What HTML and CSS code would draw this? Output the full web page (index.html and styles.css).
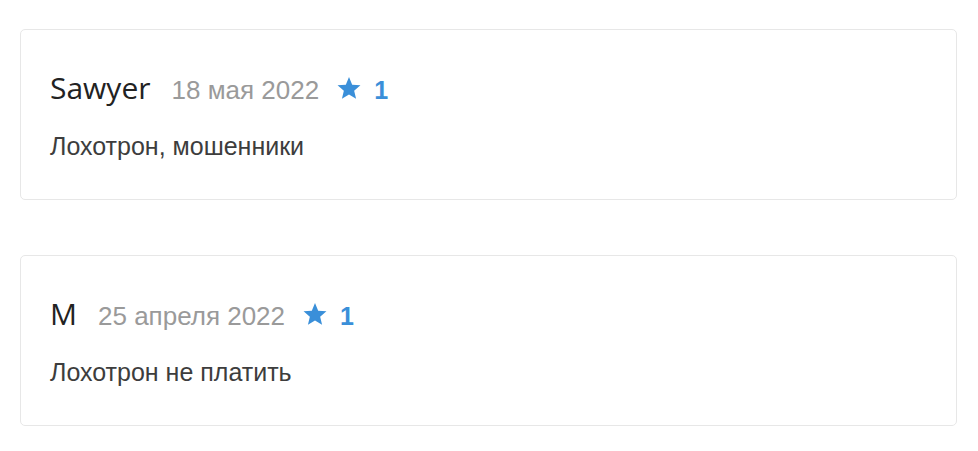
FILE: index.html
```html
<!DOCTYPE html>
<html lang="ru">
<head>
<meta charset="utf-8">
<link rel="stylesheet" href="styles.css">
</head>
<body>
<div class="list">
  <div class="card">
    <div class="head">
      <span class="name">Sawyer</span>
      <span class="date">18 мая 2022</span>
      <svg class="star" viewBox="0 0 24 21.2"><path d="M12 0L15.06 7.39L23.03 8.02L16.95 13.21L18.82 20.98L12 16.8L5.18 20.98L7.05 13.21L0.97 8.02L8.94 7.39Z"/></svg>
      <span class="num">1</span>
    </div>
    <p class="text">Лохотрон, мошенники</p>
  </div>
  <div class="card">
    <div class="head">
      <span class="name">M</span>
      <span class="date">25 апреля 2022</span>
      <svg class="star" viewBox="0 0 24 21.2"><path d="M12 0L15.06 7.39L23.03 8.02L16.95 13.21L18.82 20.98L12 16.8L5.18 20.98L7.05 13.21L0.97 8.02L8.94 7.39Z"/></svg>
      <span class="num">1</span>
    </div>
    <p class="text">Лохотрон не платить</p>
  </div>
</div>
</body>
</html>
```
FILE: styles.css
```css
html, body {
  margin: 0;
  padding: 0;
  background: #fff;
}
.list {
  display: flex;
  flex-direction: column;
  gap: 55px;
  padding: 29px 21px 0 20px;
}
.card {
  box-sizing: border-box;
  height: 171px;
  border: 1px solid #e7e7e7;
  border-radius: 5px;
  padding: 40px 29px 0 29px;
}
.head {
  display: flex;
  align-items: baseline;
  height: 36px;
  line-height: 36px;
}
.name {
  font-family: "Open Sans", sans-serif;
  font-size: 30px;
  color: #222;
}
.date {
  font-family: "Liberation Sans", Arial, sans-serif;
  font-size: 26px;
  color: #9a9a9a;
  margin-left: 21px;
}
.star {
  width: 26px;
  height: 22px;
  fill: #3a8fd9;
  margin-left: 17px;
}
.num {
  font-family: "Liberation Sans", Arial, sans-serif;
  font-weight: bold;
  font-size: 25px;
  color: #3a8fd9;
  margin-left: 12px;
}
.text {
  margin: 25px 0 0 0;
  font-family: "Liberation Sans", Arial, sans-serif;
  font-size: 25px;
  line-height: 30px;
  color: #3d3d3d;
}
```
